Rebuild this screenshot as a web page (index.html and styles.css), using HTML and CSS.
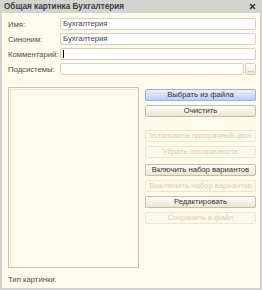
FILE: index.html
```html
<!DOCTYPE html>
<html lang="ru">
<head>
    <meta charset="UTF-8">
    <title>Общая картинка Бухгалтерия</title>
    <link rel="stylesheet" href="styles.css">
</head>
<body>
    <div class="window">
        <div class="titlebar">
            <span class="title">Общая картинка Бухгалтерия</span>
            <svg class="close" width="7" height="7" viewBox="0 0 7 7">
                <path d="M1 1L6 6M6 1L1 6" stroke="#3a3a3a" stroke-width="1.7"/>
            </svg>
        </div>
        <div class="content">
            <div class="fields">
                <label>Имя:</label>
                <div class="input">Бухгалтерия</div>
                <label>Синоним:</label>
                <div class="input">Бухгалтерия</div>
                <label>Комментарий:</label>
                <div class="input"><span class="cursor"></span></div>
                <label>Подсистемы:</label>
                <div class="select-row">
                    <div class="input"></div>
                    <div class="dots">...</div>
                </div>
            </div>

            <div class="picture-block">
                <div class="picture"></div>
                <div class="buttons">
                    <div class="btn btn-blue">Выбрать из файла</div>
                    <div class="btn">Очистить</div>
                    <div class="btn disabled group-start">Установить прозрачный фон</div>
                    <div class="btn disabled">Убрать прозрачность</div>
                    <div class="btn variants">Включить набор вариантов</div>
                    <div class="btn disabled">Выключить набор вариантов</div>
                    <div class="btn">Редактировать</div>
                    <div class="btn disabled">Сохранить в файл</div>
                </div>
            </div>

            <div class="type-label">Тип картинки:</div>
        </div>
    </div>
</body>
</html>
```

FILE: styles.css
```css
body {
    margin: 0;
    padding: 0;
    font-family: "Liberation Sans", Arial, sans-serif;
    font-size: 7.7px;
    color: #505050;
}
.window {
    width: 262px;
    height: 290px;
    box-sizing: border-box;
    background-color: #d3d3d0;
    padding: 0 2px 2px 2px;
    display: flex;
    flex-direction: column;
}
.titlebar {
    height: 13px;
    display: flex;
    align-items: center;
    justify-content: space-between;
    padding: 0 4px 0 2px;
}
.title {
    font-weight: bold;
    font-size: 8.2px;
    color: #3c3c3c;
}
.content {
    flex: 1;
    background-color: #fefaec;
    padding: 5px 4px 0 6px;
    display: flex;
    flex-direction: column;
}
.fields {
    display: grid;
    grid-template-columns: 52px 1fr;
    row-gap: 3px;
    align-items: center;
}
.input {
    height: 12px;
    box-sizing: border-box;
    background-color: #fff;
    border: 1px solid #d8d1ba;
    border-radius: 2px;
    padding-left: 2px;
    line-height: 10px;
    color: #444;
}
.cursor {
    display: inline-block;
    width: 1px;
    height: 8px;
    background-color: #000;
    vertical-align: middle;
}
.select-row {
    display: flex;
    gap: 1px;
}
.select-row .input {
    flex: 1;
}
.dots {
    width: 11px;
    height: 12px;
    box-sizing: border-box;
    border: 1px solid #d8d1ba;
    border-radius: 2px;
    background: linear-gradient(#fffef8, #ece6d4);
    font-size: 7px;
    line-height: 12px;
    text-align: center;
    color: #777;
}
.picture-block {
    display: flex;
    margin-top: 12px;
    gap: 6px;
}
.picture {
    width: 131px;
    height: 181px;
    box-sizing: border-box;
    border: 1px solid #c9c5b2;
    box-shadow: inset 1px 1px 0 #fefaec, inset 2px 2px 0 #ebe6d4;
}
.buttons {
    flex: 1;
    display: flex;
    flex-direction: column;
    gap: 4px;
    padding-top: 2px;
}
.btn {
    height: 12px;
    box-sizing: border-box;
    border: 1px solid #c4bea8;
    border-radius: 2px;
    background: linear-gradient(#fffef9, #ebe5d2);
    text-align: center;
    line-height: 10px;
    color: #333;
}
.btn-blue {
    border-color: #98b4e2;
    background: linear-gradient(#eaf0fd, #b9cff6);
}
.btn.disabled {
    border-color: #ebe4cf;
    background: #fdf9ee;
    color: #dccda9;
}
.btn.group-start {
    margin-top: 9px;
}
.btn.variants {
    margin-top: 2px;
}
.type-label {
    margin-top: 7px;
}
```
